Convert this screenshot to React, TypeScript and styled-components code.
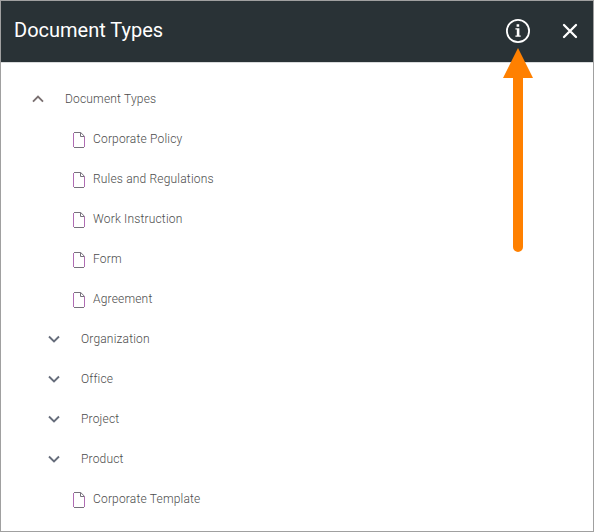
import React from "react";
import styled, { createGlobalStyle } from "styled-components";

const GlobalStyle = createGlobalStyle`
  * { box-sizing: border-box; }
  body { margin: 0; background: #fff; font-family: Roboto, "Liberation Sans", sans-serif; }
`;

const Panel = styled.main`
  position: relative;
  width: 594px;
  height: 532px;
  border: 1px solid #a0a0a0;
  background: #fff;
  overflow: hidden;
`;

const Header = styled.header`
  display: flex;
  align-items: center;
  height: 61px;
  padding: 0 15px 0 13px;
  background: #293236;
  box-shadow: 0 1px 0 #d9dbdc;
  color: #fff;
`;

const Title = styled.h1`
  flex: 1;
  margin: 0;
  padding-bottom: 3px;
  font-size: 20px;
  line-height: 24px;
  font-weight: 400;
`;

const IconButton = styled.button<{ $gap?: number }>`
  display: flex;
  padding: 0;
  margin: 0 ${(p) => p.$gap ?? 0}px 2px 0;
  border: 0;
  background: none;
  color: inherit;
`;

const Tree = styled.ul`
  list-style: none;
  margin: 0;
  padding: 17px 0 0;
`;

const Row = styled.li<{ $indent: number }>`
  display: flex;
  align-items: center;
  height: 40px;
  padding-left: ${(p) => p.$indent}px;
  color: #4c4c4c;
`;

const IconSlot = styled.span<{ $width: number; $drop: number }>`
  display: flex;
  width: ${(p) => p.$width}px;
  padding-top: ${(p) => p.$drop}px;
`;

const Label = styled.span`
  font-size: 12px;
  line-height: 16px;
  font-weight: 300;
  letter-spacing: 0.18px;
`;

const Pointer = styled.svg`
  position: absolute;
  left: 502px;
  top: 47px;
`;

const InfoIcon = () => (
  <svg width="24" height="24" viewBox="0 0 24 24" fill="none">
    <circle cx="12" cy="12" r="11.1" stroke="#fff" strokeWidth="1.8" />
    <path d="M10.6 5.2h2.6v2.5h-2.6zM9.4 9.2h4v7.2h1.3v1.4H9.4v-1.4h1.4v-5.8H9.4z" fill="#fff" />
  </svg>
);

const CloseIcon = () => (
  <svg width="16" height="16" viewBox="0 0 16 16" fill="none">
    <path d="M2 2 14 14M14 2 2 14" stroke="#fff" strokeWidth="2.3" strokeLinecap="round" />
  </svg>
);

const Chevron = ({ open }: { open?: boolean }) => (
  <svg width="12" height="8" viewBox="0 0 12 8" fill="none">
    <path d={open ? "M1 6.7 6 1.7 11 6.7" : "M1 1.5 6 6.5 11 1.5"} stroke={open ? "#796f70" : "#666d7b"} strokeWidth="1.9" />
  </svg>
);

const FileIcon = () => (
  <svg width="12" height="16" viewBox="0 0 12 16" fill="none">
    <path d="M1 .5H7.7L11.5 4.3M7.5 .5V4.5H11.5M1 15.5H11" stroke="#77717c" />
    <path d="M.5 1V15M11.5 4.5V15" stroke="#b06cb3" />
  </svg>
);

type Item = { label: string; kind: "root" | "folder" | "file" };

const items: Item[] = [
  { label: "Document Types", kind: "root" },
  { label: "Corporate Policy", kind: "file" },
  { label: "Rules and Regulations", kind: "file" },
  { label: "Work Instruction", kind: "file" },
  { label: "Form", kind: "file" },
  { label: "Agreement", kind: "file" },
  { label: "Organization", kind: "folder" },
  { label: "Office", kind: "folder" },
  { label: "Project", kind: "folder" },
  { label: "Product", kind: "folder" },
  { label: "Corporate Template", kind: "file" },
];

const layout = {
  root: { indent: 31, width: 33, drop: 0 },
  folder: { indent: 47, width: 33, drop: 0 },
  file: { indent: 72, width: 20, drop: 2 },
};

export default function App() {
  return (
    <Panel>
      <GlobalStyle />
      <Header>
        <Title>Document Types</Title>
        <IconButton aria-label="Information" $gap={32}><InfoIcon /></IconButton>
        <IconButton aria-label="Close"><CloseIcon /></IconButton>
      </Header>
      <Tree>
        {items.map(({ label, kind }) => (
          <Row key={label} $indent={layout[kind].indent}>
            <IconSlot $width={layout[kind].width} $drop={layout[kind].drop}>
              {kind === "file" ? <FileIcon /> : <Chevron open={kind === "root"} />}
            </IconSlot>
            <Label>{label}</Label>
          </Row>
        ))}
      </Tree>
      <Pointer width="31" height="206" viewBox="0 0 31 206">
        <path d="M15 0 30 30H20V199a5 5 0 0 1-10 0V30H0Z" fill="#ff8000" />
      </Pointer>
    </Panel>
  );
}
